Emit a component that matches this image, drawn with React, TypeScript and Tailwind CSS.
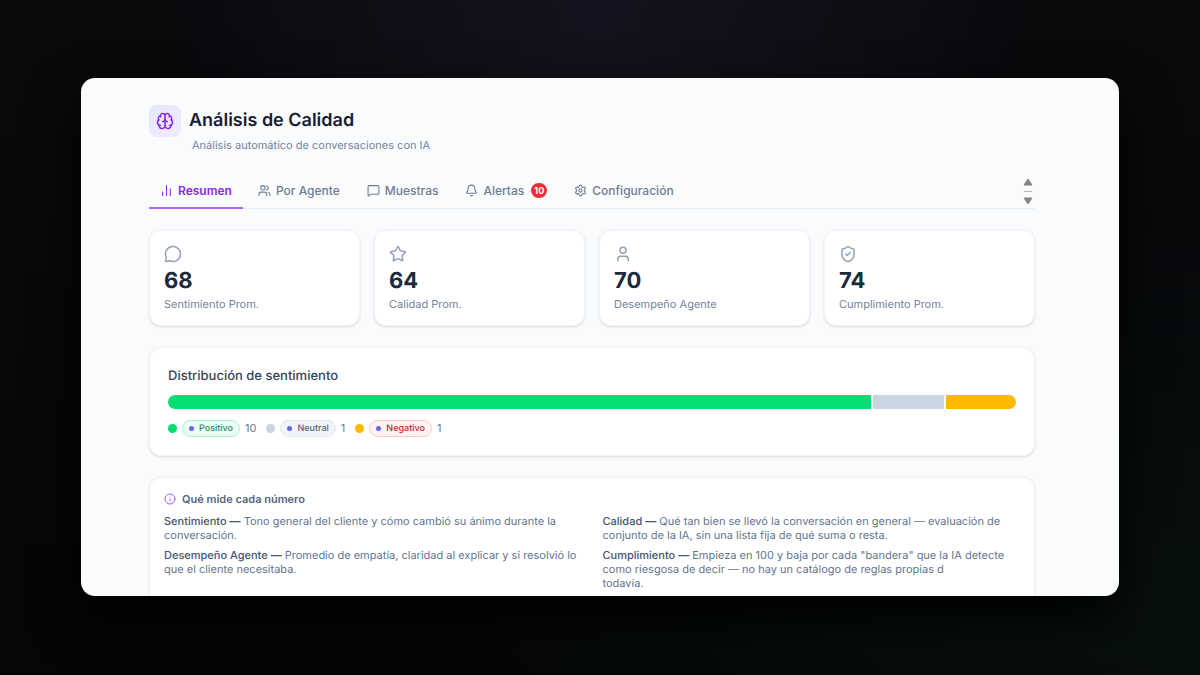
import type { ReactNode } from "react";
import {
  Bell,
  Brain,
  ChartNoAxesColumn,
  Info,
  MessageCircle,
  MessageSquare,
  Settings,
  ShieldCheck,
  Star,
  User,
  Users,
  type LucideIcon,
} from "lucide-react";

const tabs: { label: string; icon: LucideIcon; badge?: number }[] = [
  { label: "Resumen", icon: ChartNoAxesColumn },
  { label: "Por Agente", icon: Users },
  { label: "Muestras", icon: MessageSquare },
  { label: "Alertas", icon: Bell, badge: 10 },
  { label: "Configuración", icon: Settings },
];

const metrics: { value: number; label: string; icon: LucideIcon }[] = [
  { value: 68, label: "Sentimiento Prom.", icon: MessageCircle },
  { value: 64, label: "Calidad Prom.", icon: Star },
  { value: 70, label: "Desempeño Agente", icon: User },
  { value: 74, label: "Cumplimiento Prom.", icon: ShieldCheck },
];

const sentiments = [
  {
    label: "Positivo",
    count: 10,
    fill: "bg-[#05df72]",
    pill: "border-[#a4f4cf] bg-[#ecfdf5] text-[#2b8a5e]",
  },
  {
    label: "Neutral",
    count: 1,
    fill: "bg-[#cad5e2]",
    pill: "border-[#e2e8f0] bg-[#f1f5f9] text-[#52627a]",
  },
  {
    label: "Negativo",
    count: 1,
    fill: "bg-[#ffb900]",
    pill: "border-[#ffc9c9] bg-[#fef2f2] text-[#c9252d]",
  },
];

const card = "rounded-xl border border-[#f1f4f8] bg-white shadow-sm";

function Definition({ term, children }: { term: string; children: ReactNode }) {
  return (
    <p>
      <strong className="font-medium text-[#45556c]">{term} —</strong> {children}
    </p>
  );
}

export default function App() {
  return (
    <div
      className="flex min-h-screen items-center justify-center bg-[#050607] bg-[radial-gradient(ellipse_at_50%_0%,#13131f_0%,transparent_50%),radial-gradient(ellipse_at_100%_90%,#08100f_0%,transparent_45%),linear-gradient(#0a0a0d,#040506)] px-[81px] pb-[2px] font-['Inter',sans-serif] [text-rendering:geometricPrecision]"
    >
      <main className="h-[518px] w-full overflow-hidden rounded-[14px] bg-[#f9fbfd] pt-[27px] pr-[84px] pl-[68px] shadow-[0_20px_50px_#000000]">
        <header>
          <div className="flex items-center gap-2">
            <span className="flex size-8 items-center justify-center rounded-lg bg-linear-to-br from-[#e5e7fd] to-[#f1eafe]">
              <Brain className="size-[18px] text-[#8a2be8]" />
            </span>
            <h1 className="text-lg font-semibold text-[#1a2033]">Análisis de Calidad</h1>
          </div>
          <p className="pl-[43px] text-[11px] leading-4 text-[#75839a]">
            Análisis automático de conversaciones con IA
          </p>
        </header>

        <nav className="mt-[22px] flex items-end justify-between border-b border-[#e9eef4]">
          <div role="tablist" className="-mb-px flex gap-[3px]">
            {tabs.map(({ label, icon: Icon, badge }, i) => (
              <button
                key={label}
                type="button"
                role="tab"
                aria-selected={i === 0}
                className={
                  i === 0
                    ? "flex h-[34px] items-center gap-[5px] border-b-2 border-[#a76bf0] px-[11px] text-xs font-semibold text-[#8a2be8]"
                    : "flex h-[34px] items-center gap-[5px] border-b-2 border-transparent px-3 text-xs font-medium text-[#6f7d94]"
                }
              >
                <Icon className="size-[13px]" />
                {label}
                {badge && (
                  <span className="ml-[2px] rounded-full bg-[#f02d37] px-[3px] text-[9px] leading-[15px] font-bold text-white">
                    {badge}
                  </span>
                )}
              </button>
            ))}
          </div>
          <svg viewBox="0 0 10 27" className="mr-[2px] mb-[3px] h-[27px] w-[10px]" aria-hidden="true">
            <path d="M5 1L9 7H1Z M1 20H9L5 26Z" fill="#858585" stroke="#858585" strokeLinejoin="round" />
            <path d="M1 13.5H9" stroke="#b8b8b8" />
          </svg>
        </nav>

        <section className="mt-[21px] grid grid-cols-4 gap-[14px]">
          {metrics.map(({ value, label, icon: Icon }) => (
            <article key={label} className={`${card} px-[14px] pt-[14px] pb-[13px]`}>
              <Icon className="size-[18px] text-[#90a1b9]" />
              <p className="mt-1 text-[22px] leading-7 font-bold text-[#1d293d]">{value}</p>
              <p className="mt-px text-[11px] leading-4 text-[#75839a]">{label}</p>
            </article>
          ))}
        </section>

        <section className={`${card} mt-[21px] px-[18px] pt-[19px] pb-[18px]`}>
          <h2 className="text-[13px] leading-[18px] font-medium text-[#36445a]">
            Distribución de sentimiento
          </h2>
          <div className="mt-[10px] flex h-[14px] gap-[2px] overflow-hidden rounded-full">
            {sentiments.map(({ label, count, fill }) => (
              <div key={label} className={fill} style={{ flexGrow: count, flexBasis: 0 }} />
            ))}
          </div>
          <ul className="mt-[11px] flex items-center gap-[10px]">
            {sentiments.map(({ label, count, fill, pill }) => (
              <li key={label} className="flex items-center gap-[5px] text-[11px] text-[#6c7889]">
                <span className={`size-[9px] rounded-full ${fill}`} />
                <span
                  className={`flex items-center gap-[5px] rounded-full border px-[6px] text-[9px] leading-[15px] font-medium ${pill}`}
                >
                  <span className="size-[5px] rounded-full bg-[#6366f1]" />
                  {label}
                </span>
                {count}
              </li>
            ))}
          </ul>
        </section>

        <section className={`${card} mt-[21px] px-[14px] pt-[14px] pb-5`}>
          <h2 className="flex items-center gap-[6px] text-[11px] leading-[15px] font-semibold text-[#56657c]">
            <Info className="size-3 text-[#a855f7]" />
            Qué mide cada número
          </h2>
          <div className="mt-[7px] grid grid-cols-2 gap-x-[21px] gap-y-[6px] text-[11px] leading-[14px] text-[#62748e]">
            <Definition term="Sentimiento">
              Tono general del cliente y cómo cambió su ánimo durante la conversación.
            </Definition>
            <Definition term="Calidad">
              Qué tan bien se llevó la conversación en general — evaluación de conjunto de la IA,
              sin una lista fija de qué suma o resta.
            </Definition>
            <Definition term="Desempeño Agente">
              Promedio de empatía, claridad al explicar y si resolvió lo que el cliente necesitaba.
            </Definition>
            <Definition term="Cumplimiento">
              Empieza en 100 y baja por cada "bandera" que la IA detecte como riesgosa de decir — no
              hay un catálogo de reglas propias d
              <br />
              todavía.
            </Definition>
          </div>
        </section>
      </main>
    </div>
  );
}
